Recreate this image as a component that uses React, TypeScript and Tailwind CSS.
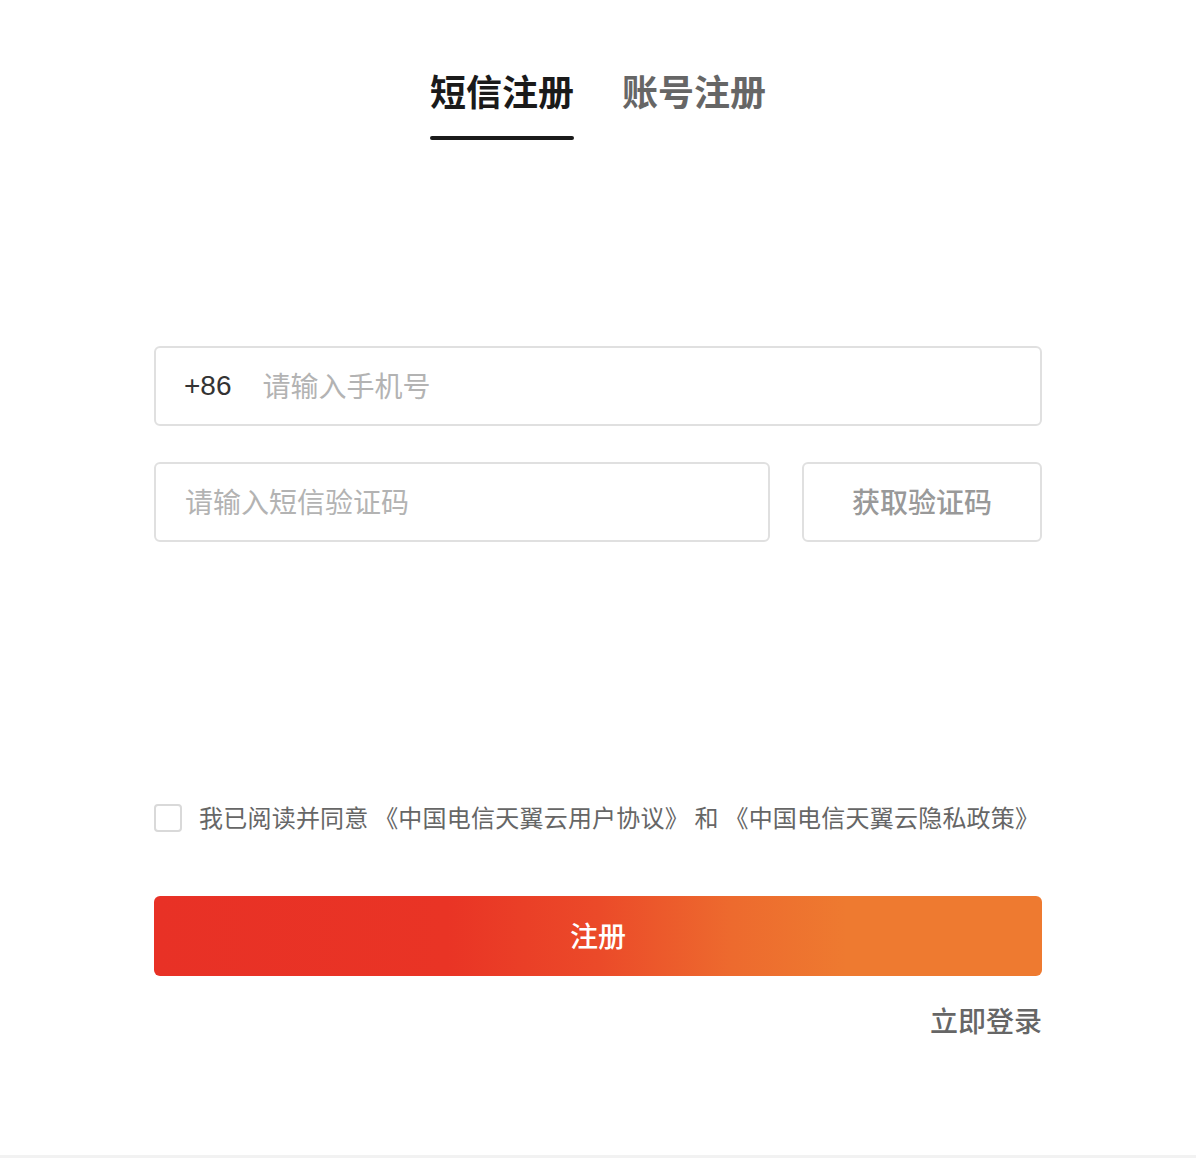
import React from "react";

const font = { fontFamily: '"Noto Sans CJK SC", "Noto Sans", sans-serif' };

export default function App() {
  return (
    <div className="relative w-full h-[1158px] bg-white overflow-hidden" style={font}>
      <div className="w-[888px] ml-[154px] flex flex-col">
        {/* Tabs */}
        <div className="flex justify-center gap-[48px] pt-[70px]">
          <div className="flex flex-col items-center">
            <div className="text-[36px] leading-[40px] font-bold text-[#1a1a1a]">短信注册</div>
            <div className="mt-[26px] w-[144px] h-[4px] rounded-full bg-[#1a1a1a]" />
          </div>
          <div className="flex flex-col items-center">
            <div className="text-[36px] leading-[40px] font-bold text-[#666666]">账号注册</div>
            <div className="mt-[26px] w-[144px] h-[4px]" />
          </div>
        </div>

        {/* Phone input */}
        <div className="mt-[206px] h-[80px] border-2 border-[#e0e0e0] rounded-[6px] flex items-center pl-[28px] pb-[3px]">
          <span className="text-[28px] text-[#333333] leading-none pt-[2px]" style={{ fontFamily: '"Liberation Sans", "Noto Sans CJK SC", sans-serif' }}>+86</span>
          <span className="ml-[31px] text-[28px] text-[#b3b3b3] leading-none">请输入手机号</span>
        </div>

        {/* SMS code row */}
        <div className="mt-[36px] flex gap-[32px]">
          <div className="flex-1 h-[80px] border-2 border-[#e0e0e0] rounded-[6px] flex items-center pl-[29px] pb-[3px]">
            <span className="text-[28px] text-[#b3b3b3] leading-none">请输入短信验证码</span>
          </div>
          <div className="w-[240px] h-[80px] border-2 border-[#e0e0e0] rounded-[6px] flex items-center justify-center pb-[3px]">
            <span className="text-[28px] text-[#999999] font-medium leading-none">获取验证码</span>
          </div>
        </div>

        {/* Agreement */}
        <div className="mt-[262px] flex items-center">
          <div className="w-[28px] h-[28px] border-2 border-[#d9d9d9] rounded-[4px]" />
          <span className="ml-[17px] text-[24px] leading-none text-[#666666] whitespace-nowrap tracking-[0.22px] pb-[2px]">
            我已阅读并同意 《中国电信天翼云用户协议》 和 《中国电信天翼云隐私政策》
          </span>
        </div>

        {/* Register button */}
        <div className="mt-[64px] h-[80px] rounded-[6px] flex items-center justify-center pb-[3px] bg-[linear-gradient(90deg,#e83126_0%,#e93425_33%,#eb4a29_50%,#ed6a2e_65%,#ee7a30_78%,#ee7a30_100%)]">
          <span className="text-[28px] text-white font-medium leading-none">注册</span>
        </div>

        {/* Login link */}
        <div className="mt-[30px] flex justify-end">
          <span className="text-[28px] text-[#666666] font-medium leading-none">立即登录</span>
        </div>
      </div>

      <div className="absolute left-0 right-0 bottom-0 h-[3px] bg-[#f2f2f2]" />
    </div>
  );
}
